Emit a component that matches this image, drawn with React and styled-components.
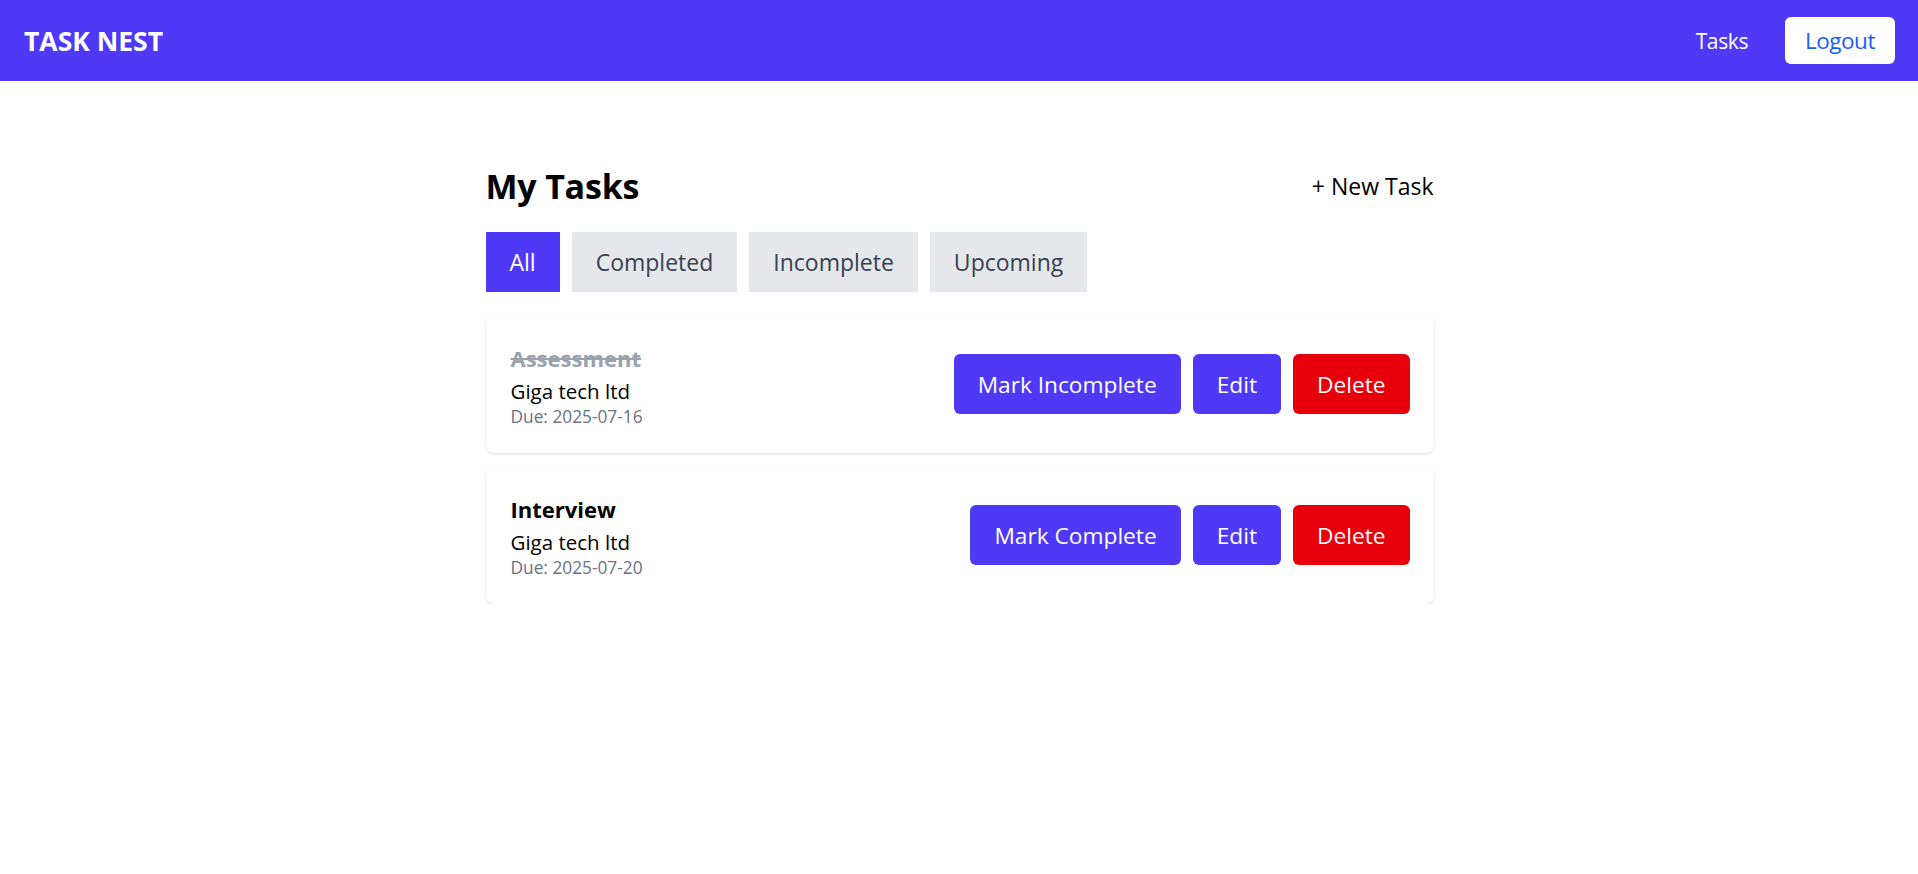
import React from "react";
import styled, { createGlobalStyle } from "styled-components";

const Global = createGlobalStyle`
  html, body { margin: 0; padding: 0; background: #ffffff; }
  body { font-family: "Open Sans", "Noto Sans", sans-serif; color: #000; }
  * { box-sizing: border-box; }
`;

const Header = styled.header`
  height: 81px;
  background: #4f39f6;
  display: flex;
  align-items: center;
  justify-content: space-between;
  padding: 0 23px 0 24px;
`;

const Brand = styled.div`
  color: #fff;
  font-weight: 700;
  font-size: 26.5px;
`;

const Nav = styled.nav`
  display: flex;
  align-items: center;
  gap: 37px;
`;

const NavLink = styled.a`
  color: #fff;
  font-size: 21px;
  text-decoration: none;
  letter-spacing: -0.4px;
`;

const LogoutButton = styled.button`
  height: 47px;
  width: 110px;
  border: none;
  border-radius: 6px;
  background: #fff;
  color: #155dfc;
  font-family: inherit;
  font-size: 22.5px;
  letter-spacing: -0.5px;
  cursor: pointer;
`;

const Main = styled.main`
  width: 949px;
  margin: 0 auto;
  padding: 82px 0 0 1px;
`;

const TitleRow = styled.div`
  display: flex;
  align-items: center;
  justify-content: space-between;
  height: 45px;
  margin-bottom: 24px;
`;

const Title = styled.h1`
  margin: 0;
  font-size: 34px;
  font-weight: 700;
  letter-spacing: -0.2px;
`;

const NewTask = styled.a`
  font-size: 23px;
  color: #000;
  text-decoration: none;
`;

const Tabs = styled.div`
  display: flex;
  gap: 12px;
  margin-bottom: 23px;
`;

const Tab = styled.button`
  height: 60px;
  padding: 0 24px;
  border: none;
  border-radius: 0;
  font-family: inherit;
  font-size: 23px;
  background: ${(p) => (p.$active ? "#4f39f6" : "#e5e7eb")};
  color: ${(p) => (p.$active ? "#fff" : "#364153")};
  cursor: pointer;
`;

const List = styled.div`
  display: flex;
  flex-direction: column;
  gap: 13px;
`;

const Card = styled.div`
  height: 138px;
  background: #fff;
  border-radius: 8px;
  box-shadow: 0 1px 3px rgba(0, 0, 0, 0.1), 0 1px 2px -1px rgba(0, 0, 0, 0.1);
  display: flex;
  align-items: center;
  justify-content: space-between;
  padding: 0 24px 0 25px;
`;

const Info = styled.div`
  display: flex;
  flex-direction: column;
`;

const TaskTitle = styled.div`
  font-size: 22px;
  font-weight: 700;
  line-height: 36px;
  color: ${(p) => (p.$done ? "#99a1af" : "#000")};
  text-decoration: ${(p) => (p.$done ? "line-through" : "none")};
`;

const Company = styled.div`
  font-size: 20.5px;
  line-height: 30px;
  color: #000;
`;

const Due = styled.div`
  font-size: 17.3px;
  line-height: 22px;
  color: #6a7282;
`;

const Actions = styled.div`
  display: flex;
  gap: 12px;
`;

const ActionButton = styled.button`
  height: 60px;
  padding: 0 24px;
  border: none;
  border-radius: 6px;
  font-family: inherit;
  font-size: 22.7px;
  color: #fff;
  background: ${(p) => (p.$danger ? "#e7000b" : "#4f39f6")};
  cursor: pointer;
`;

const tasks = [
  { title: "Assessment", company: "Giga tech ltd", due: "2025-07-16", done: true },
  { title: "Interview", company: "Giga tech ltd", due: "2025-07-20", done: false },
];

const tabs = ["All", "Completed", "Incomplete", "Upcoming"];

export default function App() {
  return (
    <>
      <Global />
      <Header>
        <Brand>TASK NEST</Brand>
        <Nav>
          <NavLink href="#">Tasks</NavLink>
          <LogoutButton>Logout</LogoutButton>
        </Nav>
      </Header>
      <Main>
        <TitleRow>
          <Title>My Tasks</Title>
          <NewTask href="#">+ New Task</NewTask>
        </TitleRow>
        <Tabs>
          {tabs.map((t, i) => (
            <Tab key={t} $active={i === 0}>
              {t}
            </Tab>
          ))}
        </Tabs>
        <List>
          {tasks.map((t) => (
            <Card key={t.title}>
              <Info>
                <TaskTitle $done={t.done}>{t.title}</TaskTitle>
                <Company>{t.company}</Company>
                <Due>Due: {t.due}</Due>
              </Info>
              <Actions>
                <ActionButton>{t.done ? "Mark Incomplete" : "Mark Complete"}</ActionButton>
                <ActionButton>Edit</ActionButton>
                <ActionButton $danger>Delete</ActionButton>
              </Actions>
            </Card>
          ))}
        </List>
      </Main>
    </>
  );
}
